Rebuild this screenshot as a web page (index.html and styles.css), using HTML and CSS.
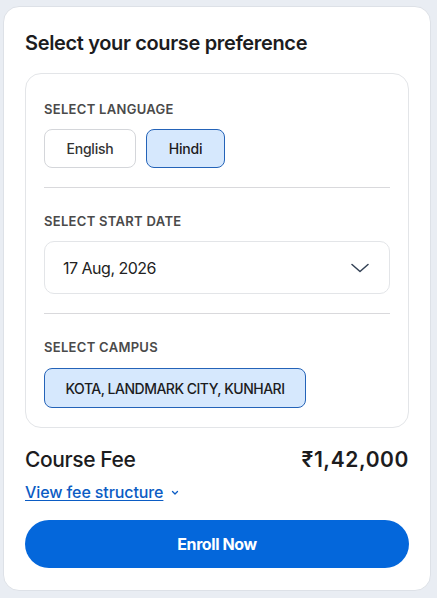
FILE: index.html
```
<!DOCTYPE html>
<html>
<head>
<meta charset="utf-8">
<link rel="stylesheet" href="styles.css">
</head>
<body>
<div class="card">
  <h2 class="title">Select your course preference</h2>
  <div class="panel">
    <div class="section">
      <div class="label">SELECT LANGUAGE</div>
      <div class="chips">
        <button class="chip lang-en">English</button>
        <button class="chip lang-hi active">Hindi</button>
      </div>
    </div>
    <div class="divider"></div>
    <div class="section">
      <div class="label">SELECT START DATE</div>
      <div class="select">
        <span>17 Aug, 2026</span>
        <svg class="chev" width="18" height="10" viewBox="0 0 18 10"><path d="M1 1.5 L9 8.5 L17 1.5" fill="none" stroke="#334155" stroke-width="1.5" stroke-linecap="round" stroke-linejoin="round"/></svg>
      </div>
    </div>
    <div class="divider"></div>
    <div class="section">
      <div class="label campus">SELECT CAMPUS</div>
      <div class="chips">
        <button class="chip active wide">KOTA, LANDMARK CITY, KUNHARI</button>
      </div>
    </div>
  </div>
  <div class="fee-row">
    <span class="fee-label">Course Fee</span>
    <span class="fee-amount">₹1,42,000</span>
  </div>
  <a class="fee-link" href="#">View fee structure</a><svg class="small-chev" width="8" height="6" viewBox="0 0 8 6"><path d="M1.5 1.5 L4 4 L6.5 1.5" fill="none" stroke="#0b5cc4" stroke-width="1.3" stroke-linecap="round" stroke-linejoin="round"/></svg>
  <button class="enroll">Enroll Now</button>
</div>
</body>
</html>
```
FILE: styles.css
```
* { box-sizing: border-box; }
html, body { margin: 0; }
body {
  background: #e9edf3;
  padding: 6px 6px 7px 3px;
  font-family: Inter, "Noto Sans", sans-serif;
  color: #1f1f1f;
}
.card {
  background: #fff;
  border: 1px solid #dde1e7;
  border-radius: 16px;
  padding: 22px 21px 22px 21px;
  height: 585px;
}
.title {
  margin: 0 0 16px 0;
  font-size: 20px;
  font-weight: 600;
  letter-spacing: -0.35px;
  line-height: 28px;
  color: #1c1c1e;
}
.panel {
  border: 1px solid #e3e5e8;
  border-radius: 16px;
  padding: 0 18px;
}
.section { padding: 25px 0 19px; }
.section:first-child { padding-top: 27px; }
.label {
  font-size: 13px;
  font-weight: 600;
  color: #4a4a4a;
  line-height: 16px;
  letter-spacing: 0.3px;
  margin-bottom: 12px;
}
.label.campus { margin-bottom: 13px; }
.chips { display: flex; gap: 10px; }
.chip {
  font-family: inherit;
  font-size: 14px;
  font-weight: 500;
  color: #333;
  background: #fff;
  border: 1px solid #d4d6da;
  border-radius: 8px;
  height: 39px;
  padding: 0;
  letter-spacing: -0.2px;
}
.lang-en { width: 92px; }
.lang-hi { width: 79px; }
.chip.active {
  background: #d6e8fd;
  border-color: #2463b8;
  color: #1c1c1e;
}
.chip.wide {
  height: 40px;
  width: 262px;
  white-space: nowrap;
  letter-spacing: -0.5px;
}
.divider { height: 1px; background: #d9d9dc; }
.select {
  height: 53px;
  border: 1px solid #e3e5e8;
  border-radius: 10px;
  display: flex;
  align-items: center;
  justify-content: space-between;
  padding: 0 20px 0 18px;
  font-size: 16px;
  color: #222;
  letter-spacing: -0.5px;
}
.fee-row {
  display: flex;
  justify-content: space-between;
  align-items: center;
  margin-top: 18px;
  line-height: 28px;
}
.fee-label { font-size: 21px; font-weight: 500; letter-spacing: -0.4px; color: #1c1c1e; }
.fee-amount { font-size: 21px; font-weight: 600; letter-spacing: 0.6px; color: #1c1c1e; }
.fee-link {
  display: inline-block;
  margin-top: 7px;
  font-size: 16px;
  font-weight: 500;
  color: #0b5cc4;
  text-decoration: underline;
  text-underline-offset: 2px;
  letter-spacing: -0.1px;
  line-height: 22px;
}
.small-chev { margin-left: 8px; vertical-align: 2px; }
.enroll {
  display: block;
  width: 100%;
  margin-top: 17px;
  height: 48px;
  border: none;
  border-radius: 24px;
  background: #0467db;
  color: #fff;
  font-family: inherit;
  font-size: 16px;
  font-weight: 700;
  letter-spacing: -0.4px;
}
```
